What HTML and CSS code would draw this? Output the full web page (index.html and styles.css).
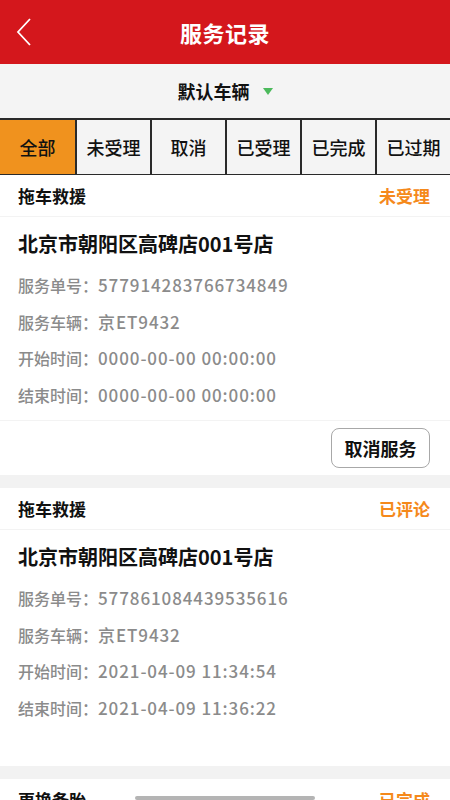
FILE: index.html
```html
<!DOCTYPE html>
<html lang="zh-CN">
<head>
    <meta charset="UTF-8">
    <meta name="viewport" content="width=device-width, initial-scale=1.0">
    <title>服务记录</title>
    <link rel="stylesheet" href="styles.css">
</head>
<body>

<div class="page">
    <header class="nav">
        <a class="nav-back" href="#">
            <svg width="16" height="30" viewBox="0 0 16 30"><polyline points="14,2 2,15 14,28" fill="none" stroke="#fff" stroke-width="1.8"/></svg>
        </a>
        <h1 class="nav-title">服务记录</h1>
    </header>

    <div class="car-select">
        <span>默认车辆</span>
        <i class="car-arrow"></i>
    </div>

    <div class="tabs">
        <div class="tab active">全部</div>
        <div class="tab">未受理</div>
        <div class="tab">取消</div>
        <div class="tab">已受理</div>
        <div class="tab">已完成</div>
        <div class="tab">已过期</div>
    </div>

    <div class="list">
        <div class="card">
            <div class="card-head">
                <span class="card-type">拖车救援</span>
                <span class="card-status">未受理</span>
            </div>
            <div class="card-body">
                <div class="card-shop">北京市朝阳区高碑店001号店</div>
                <div class="card-row">服务单号：<span>577914283766734849</span></div>
                <div class="card-row">服务车辆：<span>京ET9432</span></div>
                <div class="card-row">开始时间：<span>0000-00-00 00:00:00</span></div>
                <div class="card-row">结束时间：<span>0000-00-00 00:00:00</span></div>
            </div>
            <div class="card-foot">
                <button class="btn-cancel">取消服务</button>
            </div>
        </div>

        <div class="card">
            <div class="card-head">
                <span class="card-type">拖车救援</span>
                <span class="card-status">已评论</span>
            </div>
            <div class="card-body">
                <div class="card-shop">北京市朝阳区高碑店001号店</div>
                <div class="card-row">服务单号：<span>577861084439535616</span></div>
                <div class="card-row">服务车辆：<span>京ET9432</span></div>
                <div class="card-row">开始时间：<span>2021-04-09 11:34:54</span></div>
                <div class="card-row">结束时间：<span>2021-04-09 11:36:22</span></div>
            </div>
            <div class="card-foot empty"></div>
        </div>

        <div class="card">
            <div class="card-head">
                <span class="card-type">更换备胎</span>
                <span class="card-status">已完成</span>
            </div>
        </div>
    </div>

    <div class="home-bar"></div>
</div>

</body>
</html>
```

FILE: styles.css
```css
html, body {
    margin: 0;
    height: 800px;
    overflow: hidden;
}

body {
    font-family: "Noto Sans CJK SC", "Noto Sans", sans-serif;
    background-color: #f2f2f2;
    color: #111;
}

.page {
    position: relative;
    height: 800px;
    overflow: hidden;
}

/* top bar */
.nav {
    height: 64px;
    background-color: #d4171c;
    display: flex;
    align-items: center;
    justify-content: center;
    position: relative;
}

.nav-back {
    position: absolute;
    left: 16px;
    top: 17px;
    display: flex;
}

.nav-title {
    margin: 0;
    color: #fff;
    font-size: 22px;
    font-weight: 700;
    letter-spacing: 0.5px;
}

/* vehicle picker */
.car-select {
    height: 54px;
    background-color: #f4f4f4;
    display: flex;
    align-items: center;
    justify-content: center;
    gap: 13px;
    font-size: 18px;
    font-weight: 700;
}

.car-arrow {
    width: 0;
    height: 0;
    border-left: 5px solid transparent;
    border-right: 5px solid transparent;
    border-top: 7px solid #4cba5c;
}

/* status tabs */
.tabs {
    display: grid;
    grid-template-columns: repeat(6, 1fr);
    border-top: 2px solid #2a2a2a;
    border-bottom: 1px solid #2a2a2a;
    background-color: #f4f4f4;
}

.tab {
    height: 54px;
    display: flex;
    align-items: center;
    justify-content: center;
    font-size: 18px;
    font-weight: 500;
    border-left: 2px solid #2a2a2a;
}

.tab:first-child {
    border-left: none;
}

.tab.active {
    background-color: #f0921e;
}

/* record cards */
.list {
    display: flex;
    flex-direction: column;
    gap: 13px;
}

.card {
    background-color: #fff;
}

.card-head {
    height: 41px;
    display: flex;
    align-items: center;
    justify-content: space-between;
    padding: 0 20px 0 18px;
    border-bottom: 1px solid #f3f3f3;
}

.card-type {
    font-size: 17px;
    font-weight: 700;
}

.card-status {
    font-size: 17px;
    font-weight: 700;
    color: #f5891b;
}

.card-body {
    padding: 10px 18px 6px;
}

.card-shop {
    font-size: 20px;
    font-weight: 700;
    line-height: 34px;
    margin-bottom: 6px;
}

.card-row {
    font-size: 16px;
    font-weight: 500;
    line-height: 36.7px;
    color: #8b8b8b;
}

.card-row span {
    font-size: 17px;
    letter-spacing: 0.9px;
}

.card-foot {
    border-top: 1px solid #f3f3f3;
    padding: 7px 20px 7px;
    display: flex;
    justify-content: flex-end;
}

.card-foot.empty {
    border-top: none;
    height: 19px;
}

.btn-cancel {
    width: 99px;
    height: 40px;
    background-color: #fff;
    border: 1px solid #a8a8a8;
    border-radius: 8px;
    font-family: inherit;
    font-size: 18px;
    font-weight: 700;
    color: #111;
    padding: 0;
}

.home-bar {
    position: absolute;
    left: 135px;
    bottom: 0;
    width: 180px;
    height: 4px;
    border-radius: 2px;
    background-color: #b4b4b4;
}
```
